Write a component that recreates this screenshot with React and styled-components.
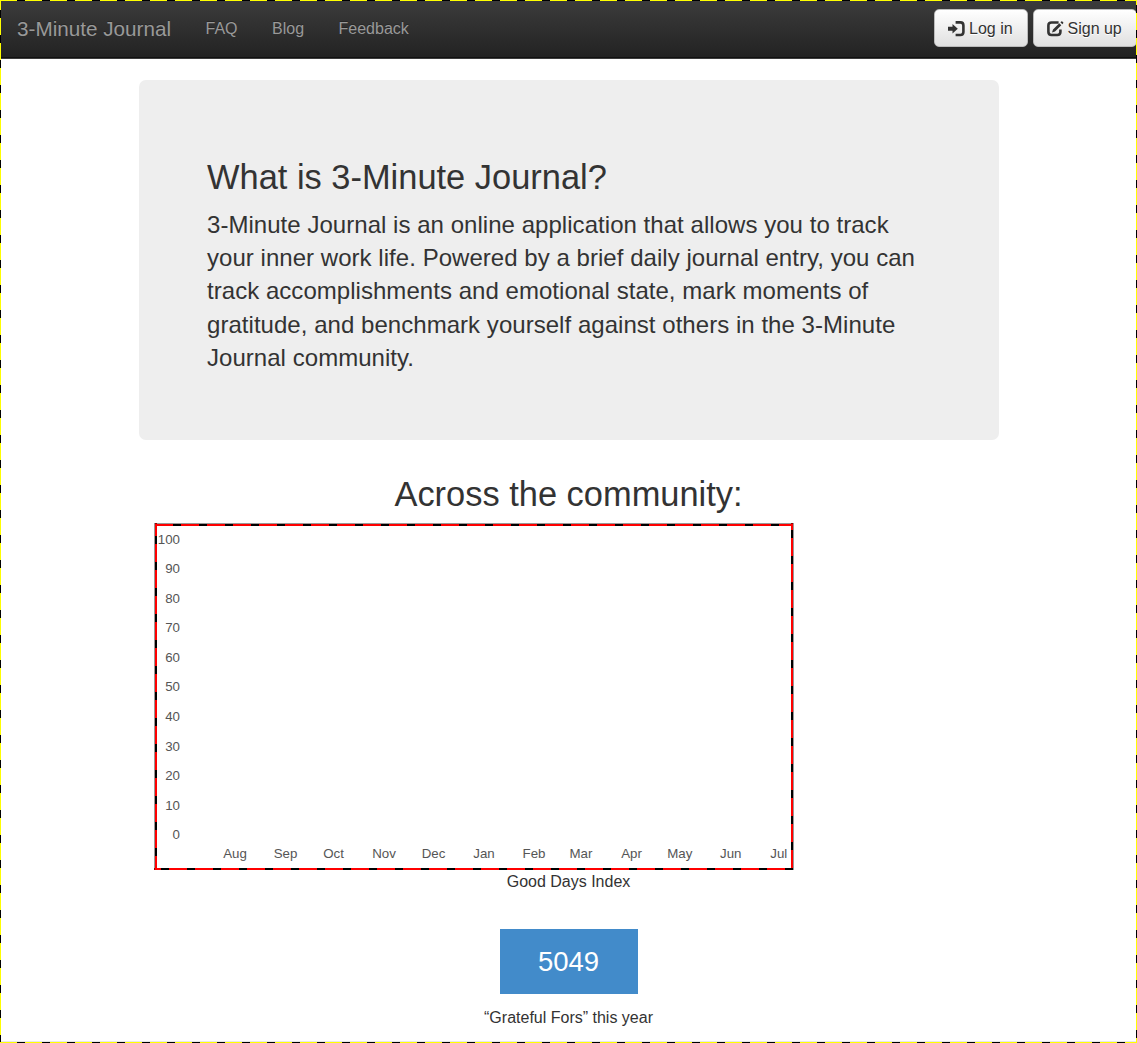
import React from 'react';
import styled, { createGlobalStyle } from 'styled-components';

const Global = createGlobalStyle`
  * { box-sizing: border-box; }
  body {
    margin: 0;
    background: #fff;
    color: #333;
    font-family: "Liberation Sans", Arial, sans-serif;
    font-size: 16px;
    overflow: hidden;
  }
`;

const dash = (dir, on, off, len, total) =>
  `repeating-linear-gradient(${dir}, ${on} 0 ${len}px, ${off} ${len}px ${total}px)`;

const Page = styled.div`
  position: relative;
  width: 1137px;
  height: 1043px;
  overflow: hidden;
`;

const PageOutline = styled.div`
  position: absolute;
  inset: 0;
  pointer-events: none;
  background:
    ${dash('90deg', '#ff0', '#000', 17, 25)} 0 0 / 100% 1px no-repeat,
    ${dash('90deg', '#ff0', '#000', 17, 25)} 0 100% / 100% 1px no-repeat,
    ${dash('180deg', '#ff0', '#000', 17, 25)} 0 -7px / 1px 1100px no-repeat,
    ${dash('180deg', '#ff0', '#000', 17, 25)} 100% -12px / 1px 1100px no-repeat,
    linear-gradient(#e8e8e8, #e8e8e8) 0 1041px / 100% 1px no-repeat;
`;

const Navbar = styled.nav`
  display: flex;
  align-items: flex-start;
  height: 59px;
  padding: 9px 0 0 17px;
  background: linear-gradient(#3c3c3c, #222);
  border-bottom: 1px solid #3c3c3c;
  box-shadow: inset 0 -1px 0 #111;
  text-shadow: 0 -1px 0 rgba(0, 0, 0, 0.25);
`;

const Brand = styled.a`
  width: 188.5px;
  color: #999;
  font-size: 20.7px;
  line-height: 40px;
  white-space: nowrap;
`;

const NavLink = styled.a`
  margin-right: 34.5px;
  color: #999;
  line-height: 40px;
`;

const Actions = styled.div`
  display: flex;
  gap: 5px;
  margin-left: auto;
`;

const Button = styled.button`
  display: flex;
  align-items: center;
  gap: ${(p) => p.$gap}px;
  width: ${(p) => p.$width}px;
  height: 38px;
  padding: 1px 0 0 13px;
  border: 1px solid #bbb;
  border-radius: 5px;
  background: linear-gradient(#fff, #e0e0e0);
  color: #333;
  font: inherit;
  line-height: 36px;
  text-shadow: 0 1px 0 #fff;
  white-space: nowrap;
`;

const Glyph = styled.svg`
  flex: none;
  width: 17px;
  height: 16px;
`;

const Hero = styled.section`
  width: 860px;
  height: 360px;
  margin: 21px 0 0 139px;
  padding: 72px 68px 0;
  border-radius: 7px;
  background: #eee;
`;

const Title = styled.h2`
  margin: 0;
  font-size: 34.43px;
  font-weight: 400;
  line-height: 50px;
`;

const Lead = styled.p`
  margin: 6px 0 0;
  font-size: 24px;
  line-height: 33.2px;
  letter-spacing: 0.04px;
  white-space: nowrap;
`;

const Community = styled.section`
  display: flex;
  flex-direction: column;
  align-items: center;
  margin: 29px 139px 0;
`;

const Chart = styled.div`
  position: relative;
  align-self: flex-start;
  width: 640px;
  height: 347px;
  margin: 4px 0 0 15px;
  color: #555;
  font-size: 13.3px;
`;

const ChartOutline = styled.div`
  position: absolute;
  inset: 0;
  pointer-events: none;
  background:
    ${dash('90deg', '#f00', '#000', 18, 26)} 1px 1px / 638px 2px no-repeat,
    ${dash('90deg', '#f00', '#000', 18, 26)} -11px 345px / 650px 2px no-repeat,
    ${dash('180deg', '#f00', '#000', 18, 26)} 1px -5px / 2px 352px no-repeat,
    ${dash('180deg', '#f00', '#000', 18, 26)} 637px -11px / 2px 358px no-repeat;
  border: 1px solid rgba(0, 0, 0, 0.4);
  border-bottom: 0;
  background-origin: border-box;
`;

const YAxis = styled.div`
  display: flex;
  flex-direction: column;
  width: 26px;
  padding-top: 1.5px;
  text-align: right;
`;

const Tick = styled.span`
  height: 29.6px;
  line-height: 30px;
`;

const XAxis = styled.div`
  display: flex;
  margin-top: -6.5px;
  line-height: 20px;
`;

const Month = styled.span`
  display: flex;
  justify-content: center;
  width: 0;
  margin-left: ${(p) => p.$step}px;
`;

const Caption = styled.p`
  margin: 0;
  line-height: 24px;
`;

const Count = styled.div`
  width: 138px;
  height: 64.5px;
  margin: 35px 0 12.5px;
  background: #428bca;
  color: #fff;
  font-size: 27.5px;
  line-height: 65px;
  text-align: center;
`;

const LoginIcon = () => (
  <Glyph viewBox="0 0 17 16" fill="none">
    <path d="M0 5.8h4.5V3L9.8 7.7 4.5 12.5V9.7H0z" fill="#333" />
    <path d="M7.6 1.4h4.8q3 0 3 3V11q0 3-3 3H7.6" stroke="#333" strokeWidth="2.6" />
  </Glyph>
);

const SignupIcon = () => (
  <Glyph viewBox="0 0 17 16" fill="none">
    <path d="M11.6 1.5H4.5Q1.4 1.5 1.4 4.5V11q0 3 3.1 3h5.8q3.1 0 3.1-3V8.6" stroke="#333" strokeWidth="2.6" />
    <path d="M5 11.6l1-3L12.3 2.3l2 2L8 10.6zM13.4 1.3l.9-.9q.5-.4 1 0l.9.9q.4.5 0 1l-.9.9z" fill="#333" />
  </Glyph>
);

const links = ['FAQ', 'Blog', 'Feedback'];
const ticks = [100, 90, 80, 70, 60, 50, 40, 30, 20, 10, 0];
const months = [
  ['Aug', 81], ['Sep', 50.5], ['Oct', 48], ['Nov', 50.5], ['Dec', 49.5], ['Jan', 50.5],
  ['Feb', 50], ['Mar', 47], ['Apr', 50.5], ['May', 48.3], ['Jun', 51], ['Jul', 48],
];

export default function App() {
  return (
    <Page>
      <Global />
      <Navbar>
        <Brand>3-Minute Journal</Brand>
        {links.map((l) => <NavLink key={l}>{l}</NavLink>)}
        <Actions>
          <Button $width={94} $gap={4}><LoginIcon />Log in</Button>
          <Button $width={104} $gap={3.5}><SignupIcon />Sign up</Button>
        </Actions>
      </Navbar>
      <Hero>
        <Title>What is 3-Minute Journal?</Title>
        <Lead>
          3-Minute Journal is an online application that allows you to track<br />
          your inner work life. Powered by a brief daily journal entry, you can<br />
          track accomplishments and emotional state, mark moments of<br />
          gratitude, and benchmark yourself against others in the 3-Minute<br />
          Journal community.
        </Lead>
      </Hero>
      <Community>
        <Title>Across the community:</Title>
        <Chart>
          <YAxis>{ticks.map((t) => <Tick key={t}>{t}</Tick>)}</YAxis>
          <XAxis>{months.map(([name, step]) => <Month key={name} $step={step}>{name}</Month>)}</XAxis>
          <ChartOutline />
        </Chart>
        <Caption>Good Days Index</Caption>
        <Count>5049</Count>
        <Caption>“Grateful Fors” this year</Caption>
      </Community>
      <PageOutline />
    </Page>
  );
}
